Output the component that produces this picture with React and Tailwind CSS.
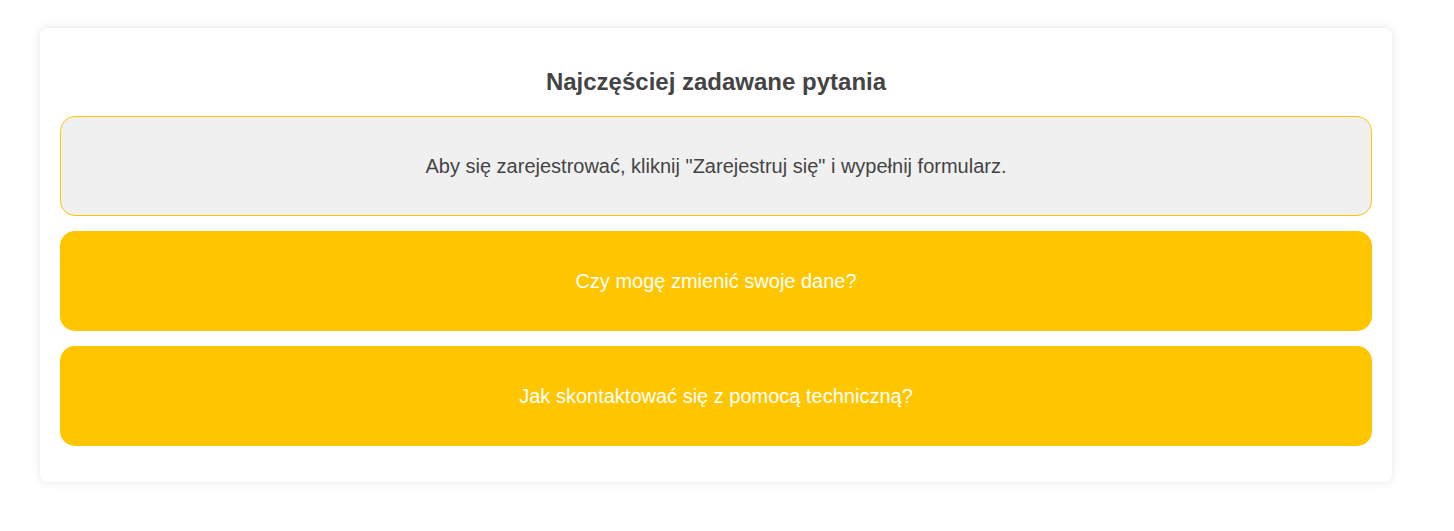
export default function App() {
  const items = [
    { q: 'Czy mogę zmienić swoje dane?' },
    { q: 'Jak skontaktować się z pomocą techniczną?' },
  ];
  return (
    <div className="min-h-[531px] bg-white pt-[28px]" style={{ fontFamily: '"Liberation Sans", Arial, sans-serif' }}>
      <div className="ml-[40px] w-[1352px] rounded-[8px] bg-white px-[20px] pt-[20px] pb-[36px] shadow-[0_0_10px_rgba(0,0,0,0.1)]">
        <h2 className="my-[20px] text-center text-[24px] font-bold leading-[28px] text-[#444444]">
          Najczęściej zadawane pytania
        </h2>
        <div className="flex flex-col gap-[15px]">
          <div className="flex h-[100px] items-center justify-center rounded-[15px] border border-[#ffc600] bg-[#f0f0f0] text-[20px] text-[#444444]">
            Aby się zarejestrować, kliknij "Zarejestruj się" i wypełnij formularz.
          </div>
          {items.map((it) => (
            <div
              key={it.q}
              className="flex h-[100px] items-center justify-center rounded-[15px] bg-[#ffc600] text-[20px] text-white"
            >
              {it.q}
            </div>
          ))}
        </div>
      </div>
    </div>
  );
}
